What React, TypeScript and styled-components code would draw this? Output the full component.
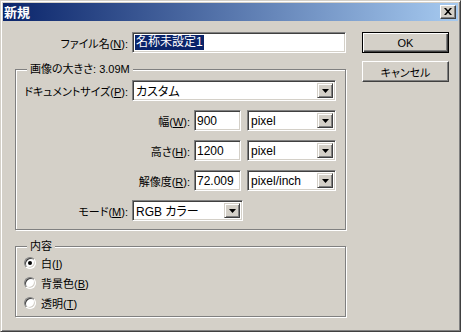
import styled, { createGlobalStyle } from "styled-components";

const GlobalStyle = createGlobalStyle`
  html, body {
    margin: 0;
    padding: 0;
    background: #d4d0c8;
  }
  body {
    font-family: "Liberation Sans", "Noto Sans CJK JP", sans-serif;
    font-size: 12px;
    color: #000;
  }
  * {
    box-sizing: border-box;
  }
`;

const sizeRows = [
  { label: "幅", key: "W", value: "900", unit: "pixel" },
  { label: "高さ", key: "H", value: "1200", unit: "pixel" },
  { label: "解像度", key: "R", value: "72.009", unit: "pixel/inch" },
];

const contentOptions = [
  { label: "白", key: "I", checked: true },
  { label: "背景色", key: "B", checked: false },
  { label: "透明", key: "T", checked: false },
];

function Arrow() {
  return (
    <svg width="7" height="4" viewBox="0 0 7 4">
      <path d="M0 0h7L3.5 4z" fill="#000" />
    </svg>
  );
}

function Combo({ text, width }: { text: string; width: number }) {
  return (
    <ComboBox $w={width}>
      <ComboText>{text}</ComboText>
      <DropButton>
        <Arrow />
      </DropButton>
    </ComboBox>
  );
}

export default function App() {
  return (
    <>
      <GlobalStyle />
      <Window>
        <TitleBar>
          <Title>新規</Title>
          <CloseButton>
            <svg width="8" height="7" viewBox="0 0 8 7">
              <path d="M0 0h2l2 2.3L6 0h2L5 3.5 8 7H6L4 4.7 2 7H0l3-3.5z" fill="#000" />
            </svg>
          </CloseButton>
        </TitleBar>

        <Body>
          <LeftColumn>
            <Row>
              <Label $w={117}>
                ファイル名(<u>N</u>):
              </Label>
              <TextInput $w={214}>
                <Selected>名称未設定1</Selected>
              </TextInput>
            </Row>

            <Group $h={161} $mt={16}>
              <Caption>画像の大きさ: 3.09M</Caption>
              <GroupRows>
                <Row>
                  <Label $w={116}>
                    ドキュメントサイズ(<u>P</u>):
                  </Label>
                  <Combo text="カスタム" width={204} />
                </Row>
                {sizeRows.map((row) => (
                  <Row key={row.key}>
                    <Label $w={178}>
                      {row.label}(<u>{row.key}</u>):
                    </Label>
                    <TextInput $w={47}>{row.value}</TextInput>
                    <Spacer />
                    <Combo text={row.unit} width={89} />
                  </Row>
                ))}
                <Row>
                  <Label $w={116}>
                    モード(<u>M</u>):
                  </Label>
                  <Combo text="RGB カラー" width={111} />
                </Row>
              </GroupRows>
            </Group>

            <Group $h={71} $mt={16}>
              <Caption>内容</Caption>
              {contentOptions.map((opt) => (
                <RadioRow key={opt.key}>
                  <Radio $checked={opt.checked} />
                  <RadioLabel>
                    {opt.label}(<u>{opt.key}</u>)
                  </RadioLabel>
                </RadioRow>
              ))}
            </Group>
          </LeftColumn>

          <RightColumn>
            <Button $default>OK</Button>
            <Button>キャンセル</Button>
          </RightColumn>
        </Body>
      </Window>
    </>
  );
}

const Window = styled.div`
  width: 461px;
  height: 332px;
  background: #d4d0c8;
  border: 1px solid;
  border-color: #d4d0c8 #404040 #404040 #d4d0c8;
  box-shadow: inset 1px 1px #fff, inset -1px -1px #808080;
  padding: 2px;
  display: flex;
  flex-direction: column;
`;

const TitleBar = styled.div`
  height: 18px;
  flex-shrink: 0;
  display: flex;
  align-items: center;
  justify-content: space-between;
  padding: 0 2px 0 1px;
  background: linear-gradient(to right, #0a246a, #a6caf0);
`;

const Title = styled.span`
  color: #fff;
  font-family: "Noto Sans CJK JP", sans-serif;
  font-weight: 700;
  font-size: 13px;
  line-height: 18px;
`;

const CloseButton = styled.div`
  width: 16px;
  height: 14px;
  background: #d4d0c8;
  border: 1px solid;
  border-color: #fff #404040 #404040 #fff;
  box-shadow: inset -1px -1px #808080;
  display: flex;
  align-items: center;
  justify-content: center;
  padding-bottom: 1px;
`;

const Body = styled.div`
  flex: 1;
  display: flex;
  gap: 16px;
  padding: 11px 0 0 12px;
`;

const LeftColumn = styled.div`
  width: 331px;
  display: flex;
  flex-direction: column;
`;

const RightColumn = styled.div`
  width: 87px;
  display: flex;
  flex-direction: column;
  gap: 8px;
`;

const Row = styled.div`
  display: flex;
  align-items: center;
  height: 21px;
`;

const Label = styled.label<{ $w: number }>`
  width: ${(p) => p.$w}px;
  padding-right: 4px;
  text-align: right;
  white-space: nowrap;
  font-size: 11px;
  font-feature-settings: "palt";
`;

const sunken = `
  background: #fff;
  border: 1px solid;
  border-color: #808080 #fff #fff #808080;
  box-shadow: inset 1px 1px #404040, inset -1px -1px #d4d0c8;
`;

const TextInput = styled.div<{ $w: number }>`
  ${sunken}
  width: ${(p) => p.$w}px;
  height: 21px;
  padding: 0 2px;
  display: flex;
  align-items: center;
  white-space: nowrap;
  overflow: hidden;
`;

const Selected = styled.span`
  background: #0a246a;
  color: #fff;
  line-height: 15px;
  padding: 0 1px;
  font-feature-settings: "palt";
`;

const Spacer = styled.span`
  width: 6px;
`;

const ComboBox = styled.div<{ $w: number }>`
  ${sunken}
  width: ${(p) => p.$w}px;
  height: 21px;
  padding: 2px;
  display: flex;
  align-items: stretch;
`;

const ComboText = styled.span`
  flex: 1;
  padding-left: 1px;
  display: flex;
  align-items: center;
  white-space: nowrap;
  font-feature-settings: "palt";
`;

const DropButton = styled.span`
  width: 16px;
  background: #d4d0c8;
  border: 1px solid;
  border-color: #d4d0c8 #404040 #404040 #d4d0c8;
  box-shadow: inset 1px 1px #fff, inset -1px -1px #808080;
  display: flex;
  align-items: center;
  justify-content: center;
`;

const Group = styled.div<{ $h: number; $mt: number }>`
  height: ${(p) => p.$h}px;
  margin-top: ${(p) => p.$mt}px;
  border: 1px solid #808080;
  box-shadow: 1px 1px #fff, inset 1px 1px #fff;
  display: flex;
  flex-direction: column;
`;

const Caption = styled.span`
  align-self: flex-start;
  margin: -8px 0 0 11px;
  padding: 0 3px;
  height: 14px;
  line-height: 14px;
  background: #d4d0c8;
  white-space: nowrap;
  font-size: 11px;
  font-feature-settings: "palt";
`;

const GroupRows = styled.div`
  display: flex;
  flex-direction: column;
  gap: 9px;
  padding-top: 4px;
`;

const RadioRow = styled.div`
  height: 20px;
  display: flex;
  align-items: center;
  gap: 5px;
  padding-left: 8px;
`;

const Radio = styled.span<{ $checked: boolean }>`
  width: 12px;
  height: 12px;
  border-radius: 50%;
  background: #fff;
  border: 1px solid;
  border-color: #808080 #fff #fff #808080;
  box-shadow: inset 1px 1px #404040, inset -1px -1px #d4d0c8;
  display: flex;
  align-items: center;
  justify-content: center;

  &::after {
    content: "";
    width: 4px;
    height: 4px;
    border-radius: 50%;
    background: #000;
    display: ${(p) => (p.$checked ? "block" : "none")};
  }
`;

const RadioLabel = styled.span`
  font-size: 11px;
  font-feature-settings: "palt";
`;

const Button = styled.div<{ $default?: boolean }>`
  height: 21px;
  background: #d4d0c8;
  display: flex;
  align-items: center;
  justify-content: center;
  font-size: 11px;
  font-feature-settings: "palt";
  border: 1px solid;
  border-color: ${(p) => (p.$default ? "#000" : "#fff #404040 #404040 #fff")};
  box-shadow: ${(p) =>
    p.$default
      ? "inset 1px 1px #fff, inset -1px -1px #404040, inset -2px -2px #808080"
      : "inset -1px -1px #808080"};
`;
